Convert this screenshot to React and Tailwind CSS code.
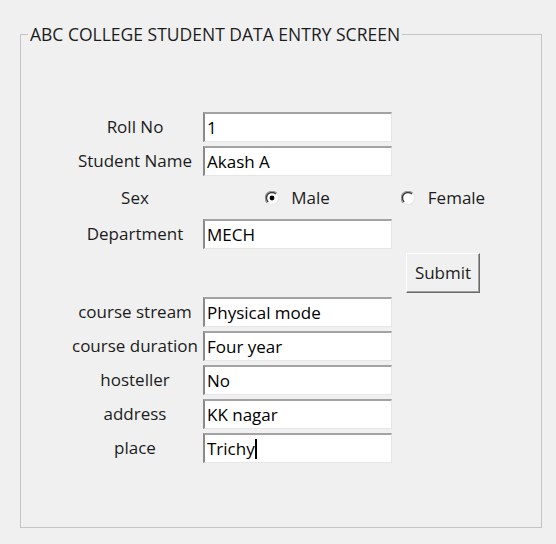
import React from 'react';

function Radio({ checked }) {
  return (
    <svg width="14" height="14" viewBox="0 0 14 14" className="shrink-0">
      <circle cx="7" cy="7" r="6" fill="#fff" />
      <path d="M2.2 11.8 A6.6 6.6 0 0 1 11.8 2.2" fill="none" stroke="#9a9a9a" strokeWidth="1.2" />
      <path d="M3.1 10.9 A5.5 5.5 0 0 1 10.9 3.1" fill="none" stroke="#3a3a3a" strokeWidth="1.4" />
      <path d="M11.8 2.2 A6.6 6.6 0 0 1 2.2 11.8" fill="none" stroke="#e8e8e8" strokeWidth="1.2" />
      {checked && <circle cx="7" cy="7" r="2.4" fill="#000" />}
    </svg>
  );
}

function Field({ value, cursor }) {
  return (
    <div className="h-[30px] bg-white border-t-2 border-l-2 border-t-[#a3a3a3] border-l-[#8a8a8a] border-r border-b border-r-[#e6e6e6] border-b-[#e6e6e6] pl-[2px] flex items-center text-black">
      <span>{value}</span>
      {cursor && <span className="w-[2px] h-[20px] bg-black" />}
    </div>
  );
}

const Label = ({ children }) => (
  <div className="flex items-center justify-center text-[#1c1c1c] whitespace-nowrap">{children}</div>
);

export default function App() {
  const rowsTop = [
    ['Roll No', '1'],
    ['Student Name', 'Akash A'],
  ];
  const rowsBottom = [
    ['course stream', 'Physical mode'],
    ['course duration', 'Four year'],
    ['hosteller', 'No'],
    ['address', 'KK nagar'],
  ];

  return (
    <div className="w-[556px] h-[544px] bg-[#f0f0f0] pt-[23px] pl-[20px] font-['Open_Sans',sans-serif] text-[17px] leading-[20px]">
      <fieldset className="w-[522px] h-[505px] border border-[#c4c4c4] m-0 p-0">
        <legend className="ml-[7px] px-[2px] text-[#1c1c1c] text-[17.5px] leading-[22px]">
          ABC COLLEGE STUDENT DATA ENTRY SCREEN
        </legend>

        <div className="mt-[67px] ml-[50px] grid grid-cols-[128px_189px_94px] gap-x-[4px] gap-y-[4px] grid-rows-[30px_30px_35px_30px_40px_30px_30px_30px_30px_30px]">
          {rowsTop.map(([l, v]) => (
            <React.Fragment key={l}>
              <Label>{l}</Label>
              <Field value={v} />
              <div />
            </React.Fragment>
          ))}

          <Label>Sex</Label>
          <div className="flex items-center justify-center gap-[12px]">
            <Radio checked />
            <span className="text-[#1c1c1c]">Male</span>
          </div>
          <div className="flex items-center justify-center gap-[13px]">
            <Radio />
            <span className="text-[#1c1c1c]">Female</span>
          </div>

          <Label>Department</Label>
          <Field value="MECH" />
          <div />

          <div />
          <div />
          <div className="flex justify-center">
            <button className="w-[74px] h-[40px] bg-[#f0f0f0] border border-t-white border-l-white border-r-[#6a6a6a] border-b-[#6a6a6a] shadow-[inset_-1px_-1px_0_#a0a0a0] text-[#1c1c1c]">
              Submit
            </button>
          </div>

          {rowsBottom.map(([l, v]) => (
            <React.Fragment key={l}>
              <Label>{l}</Label>
              <Field value={v} />
              <div />
            </React.Fragment>
          ))}

          <Label>place</Label>
          <Field value="Trichy" cursor />
          <div />
        </div>
      </fieldset>
    </div>
  );
}
